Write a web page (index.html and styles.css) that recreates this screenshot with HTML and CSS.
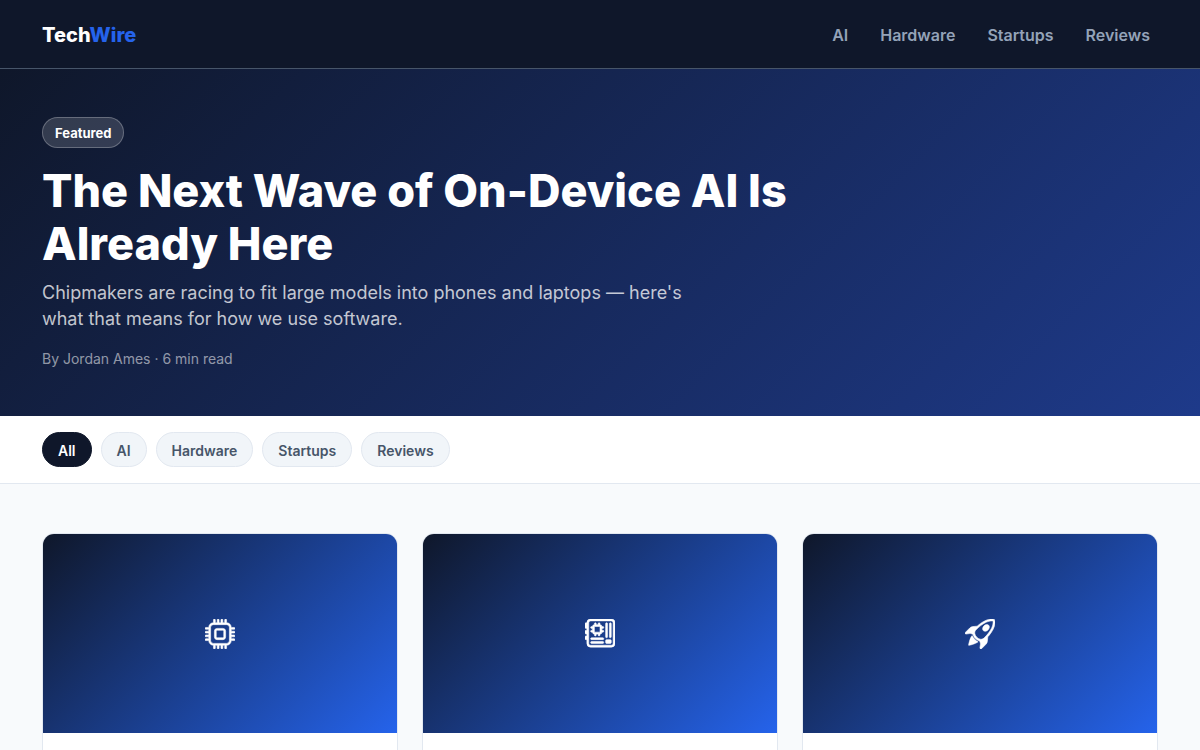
FILE: index.html
```html
<!DOCTYPE html>
<html lang="en">
<head>
  <meta charset="UTF-8" />
  <meta name="viewport" content="width=device-width, initial-scale=1.0" />
  <title>TechWire</title>
  <link rel="stylesheet" href="styles.css">
</head>
<body>
  <header class="site-header">
    <div class="container header-inner">
      <a href="#" class="logo">Tech<span>Wire</span></a>
      <nav class="main-nav">
        <a href="#ai">AI</a>
        <a href="#hardware">Hardware</a>
        <a href="#startups">Startups</a>
        <a href="#reviews">Reviews</a>
      </nav>
    </div>
  </header>

  <section class="hero">
    <div class="container">
      <span class="badge">Featured</span>
      <h1>The Next Wave of On-Device AI Is Already Here</h1>
      <p class="hero-text">Chipmakers are racing to fit large models into phones and laptops — here's what that means for how we use software.</p>
      <p class="hero-meta">By Jordan Ames · 6 min read</p>
    </div>
  </section>

  <div class="filter-bar">
    <div class="container filters">
      <button type="button" class="filter active">All</button>
      <button type="button" class="filter">AI</button>
      <button type="button" class="filter">Hardware</button>
      <button type="button" class="filter">Startups</button>
      <button type="button" class="filter">Reviews</button>
    </div>
  </div>

  <main class="container articles">
    <article class="card">
      <div class="card-image">
        <!-- CPU -->
        <svg class="icon" viewBox="0 0 16 16" fill="currentColor" aria-hidden="true">
          <path d="M5 0a.5.5 0 0 1 .5.5V2h1V.5a.5.5 0 0 1 1 0V2h1V.5a.5.5 0 0 1 1 0V2h1V.5a.5.5 0 0 1 1 0V2A2.5 2.5 0 0 1 14 4.5h1.5a.5.5 0 0 1 0 1H14v1h1.5a.5.5 0 0 1 0 1H14v1h1.5a.5.5 0 0 1 0 1H14v1h1.5a.5.5 0 0 1 0 1H14a2.5 2.5 0 0 1-2.5 2.5v1.5a.5.5 0 0 1-1 0V14h-1v1.5a.5.5 0 0 1-1 0V14h-1v1.5a.5.5 0 0 1-1 0V14h-1v1.5a.5.5 0 0 1-1 0V14A2.5 2.5 0 0 1 2 11.5H.5a.5.5 0 0 1 0-1H2v-1H.5a.5.5 0 0 1 0-1H2v-1H.5a.5.5 0 0 1 0-1H2v-1H.5a.5.5 0 0 1 0-1H2A2.5 2.5 0 0 1 4.5 2V.5A.5.5 0 0 1 5 0m-.5 3A1.5 1.5 0 0 0 3 4.5v7A1.5 1.5 0 0 0 4.5 13h7a1.5 1.5 0 0 0 1.5-1.5v-7A1.5 1.5 0 0 0 11.5 3zM5 6.5A1.5 1.5 0 0 1 6.5 5h3A1.5 1.5 0 0 1 11 6.5v3A1.5 1.5 0 0 1 9.5 11h-3A1.5 1.5 0 0 1 5 9.5zM6.5 6a.5.5 0 0 0-.5.5v3a.5.5 0 0 0 .5.5h3a.5.5 0 0 0 .5-.5v-3a.5.5 0 0 0-.5-.5z"/>
        </svg>
      </div>
      <div class="card-body"></div>
    </article>

    <article class="card">
      <div class="card-image">
        <!-- Motherboard -->
        <svg class="icon" viewBox="0 0 16 16" fill="currentColor" aria-hidden="true">
          <path d="M11.5 2a.5.5 0 0 1 .5.5v7a.5.5 0 0 1-1 0v-7a.5.5 0 0 1 .5-.5m2 0a.5.5 0 0 1 .5.5v7a.5.5 0 0 1-1 0v-7a.5.5 0 0 1 .5-.5m-10 8a.5.5 0 0 0 0 1h6a.5.5 0 0 0 0-1zm0 2a.5.5 0 0 0 0 1h6a.5.5 0 0 0 0-1zM5 3a1 1 0 0 0-1 1h-.5a.5.5 0 0 0 0 1H4v1h-.5a.5.5 0 0 0 0 1H4a1 1 0 0 0 1 1v.5a.5.5 0 0 0 1 0V8h1v.5a.5.5 0 0 0 1 0V8a1 1 0 0 0 1-1h.5a.5.5 0 0 0 0-1H9V5h.5a.5.5 0 0 0 0-1H9a1 1 0 0 0-1-1v-.5a.5.5 0 0 0-1 0V3H6v-.5a.5.5 0 0 0-1 0zm0 1h3v3H5zm6.5 7a.5.5 0 0 0-.5.5v1a.5.5 0 0 0 .5.5h2a.5.5 0 0 0 .5-.5v-1a.5.5 0 0 0-.5-.5z"/>
          <path d="M1 2a2 2 0 0 1 2-2h11a2 2 0 0 1 2 2v11a2 2 0 0 1-2 2H3a2 2 0 0 1-2-2v-2H.5a.5.5 0 0 1-.5-.5v-1A.5.5 0 0 1 .5 9H1V8H.5a.5.5 0 0 1-.5-.5v-1A.5.5 0 0 1 .5 6H1V5H.5a.5.5 0 0 1-.5-.5v-2A.5.5 0 0 1 .5 2zm1 11a1 1 0 0 0 1 1h11a1 1 0 0 0 1-1V2a1 1 0 0 0-1-1H3a1 1 0 0 0-1 1z"/>
        </svg>
      </div>
      <div class="card-body"></div>
    </article>

    <article class="card">
      <div class="card-image">
        <!-- Rocket -->
        <svg class="icon" viewBox="0 0 16 16" fill="currentColor" aria-hidden="true">
          <path d="M9.752 6.193c.599.6 1.73.437 2.528-.362s.96-1.932.362-2.531c-.599-.6-1.73-.438-2.528.361-.798.8-.96 1.933-.362 2.532"/>
          <path d="M15.811 3.312c-.363 1.534-1.334 3.626-3.64 6.218l-.24 2.408a2.56 2.56 0 0 1-.732 1.526L8.817 15.85a.51.51 0 0 1-.867-.434l.27-1.899c.04-.28-.013-.593-.131-.956a9 9 0 0 0-.249-.657l-.082-.202c-.815-.197-1.578-.662-2.191-1.277-.614-.615-1.079-1.379-1.275-2.195l-.203-.083a10 10 0 0 0-.655-.248c-.363-.119-.675-.172-.955-.132l-1.896.27A.51.51 0 0 1 .15 7.17l2.382-2.386c.41-.41.947-.67 1.524-.734h.006l2.4-.238C9.005 1.55 11.087.582 12.623.208c.89-.217 1.59-.232 2.08-.188.244.023.435.06.57.093q.1.026.16.045c.184.06.279.13.351.295l.029.073a3.5 3.5 0 0 1 .157.721c.055.485.051 1.178-.159 2.065m-4.828 7.475.04-.04-.107 1.081a1.54 1.54 0 0 1-.44.913l-1.298 1.3.054-.38c.072-.506-.034-.993-.172-1.418a9 9 0 0 0-.164-.45c.738-.065 1.462-.38 2.087-1.006M5.205 5c-.625.626-.94 1.351-1.004 2.09a9 9 0 0 0-.45-.164c-.424-.138-.91-.244-1.416-.172l-.38.054 1.3-1.3c.245-.246.566-.401.91-.44l1.08-.107zm9.406-3.961c-.38-.034-.967-.027-1.746.163-1.558.38-3.917 1.496-6.937 4.521-.62.62-.799 1.34-.687 2.051.107.676.483 1.362 1.048 1.928.564.565 1.25.941 1.924 1.049.71.112 1.429-.067 2.048-.688 3.079-3.083 4.192-5.444 4.556-6.987.183-.771.18-1.345.138-1.713a3 3 0 0 0-.045-.283 3 3 0 0 0-.3-.041Z"/>
          <path d="M7.009 12.139a7.6 7.6 0 0 1-1.804-1.352A7.6 7.6 0 0 1 3.794 8.86c-1.102.992-1.965 5.054-1.839 5.18.125.126 3.936-.896 5.054-1.902Z"/>
        </svg>
      </div>
      <div class="card-body"></div>
    </article>
  </main>
</body>
</html>
```
FILE: styles.css
```css
* {
  margin: 0;
  padding: 0;
  box-sizing: border-box;
}
body {
  font-family: 'Inter', sans-serif;
  background: #f8fafc;
  color: #0f172a;
  line-height: 1.5;
}
a {
  text-decoration: none;
}
.container {
  width: 100%;
  max-width: 1200px;
  margin: 0 auto;
  padding: 0 42px;
}
/* Header */
.site-header {
  background: #0f172a;
  border-bottom: 1px solid #475569;
}
.header-inner {
  display: flex;
  justify-content: space-between;
  align-items: center;
  padding-top: 15px;
  padding-bottom: 13px;
}
.logo {
  font-size: 20px;
  font-weight: 800;
  color: #fff;
}
.logo span {
  color: #2563eb;
}
.main-nav {
  display: flex;
  gap: 16px;
}
.main-nav a {
  padding: 8px;
  font-size: 16px;
  font-weight: 600;
  color: #94a3b8;
}
.main-nav a:hover {
  color: #fff;
}
/* Hero */
.hero {
  background: linear-gradient(135deg, #0f172a, #1e3a8a);
  color: #fff;
  padding: 48px 0;
}
.badge {
  display: inline-block;
  padding: 6px 12px 5px;
  background: rgba(255, 255, 255, 0.15);
  border: 1px solid rgba(255, 255, 255, 0.25);
  border-radius: 999px;
  font-size: 13px;
  font-weight: 700;
  line-height: 18px;
}
.hero h1 {
  max-width: 760px;
  margin: 16px 0 10px;
  font-size: 45px;
  font-weight: 800;
  line-height: 53px;
}
.hero-text {
  max-width: 660px;
  margin-bottom: 18px;
  font-size: 18px;
  line-height: 26px;
  color: rgba(255, 255, 255, 0.75);
}
.hero-meta {
  font-size: 14px;
  line-height: 18px;
  color: rgba(255, 255, 255, 0.55);
}
/* Filters */
.filter-bar {
  background: #fff;
  border-bottom: 1px solid #e2e8f0;
  padding: 16px 0;
}
.filters {
  display: flex;
  flex-wrap: wrap;
  gap: 9px;
}
.filter {
  padding: 10px 15px 7px;
  background: #f1f5f9;
  border: 1px solid #e2e8f0;
  border-radius: 999px;
  font-family: inherit;
  font-size: 14px;
  font-weight: 600;
  line-height: 16px;
  color: #475569;
  cursor: pointer;
}
.filter.active {
  background: #0f172a;
  border-color: #0f172a;
  color: #fff;
}
/* Article Cards */
.articles {
  display: grid;
  grid-template-columns: repeat(3, 1fr);
  gap: 24px;
  padding-top: 49px;
  padding-bottom: 49px;
}
.card {
  background: #fff;
  border: 1px solid #e2e8f0;
  border-radius: 12px;
  overflow: hidden;
}
.card-image {
  display: flex;
  justify-content: center;
  align-items: center;
  aspect-ratio: 16 / 9;
  background: linear-gradient(135deg, #0f172a, #2563eb);
  color: #fff;
}
.icon {
  width: 30px;
  height: 30px;
  stroke: currentColor;
  stroke-width: 0.3;
}
.card-body {
  min-height: 120px;
  padding: 20px;
}
/* Responsive Adjustments */
@media (max-width: 800px) {
  .articles {
    grid-template-columns: 1fr;
  }
  .container {
    padding-left: 20px;
    padding-right: 20px;
  }
  .hero h1 {
    font-size: 32px;
    line-height: 38px;
  }
}
```
